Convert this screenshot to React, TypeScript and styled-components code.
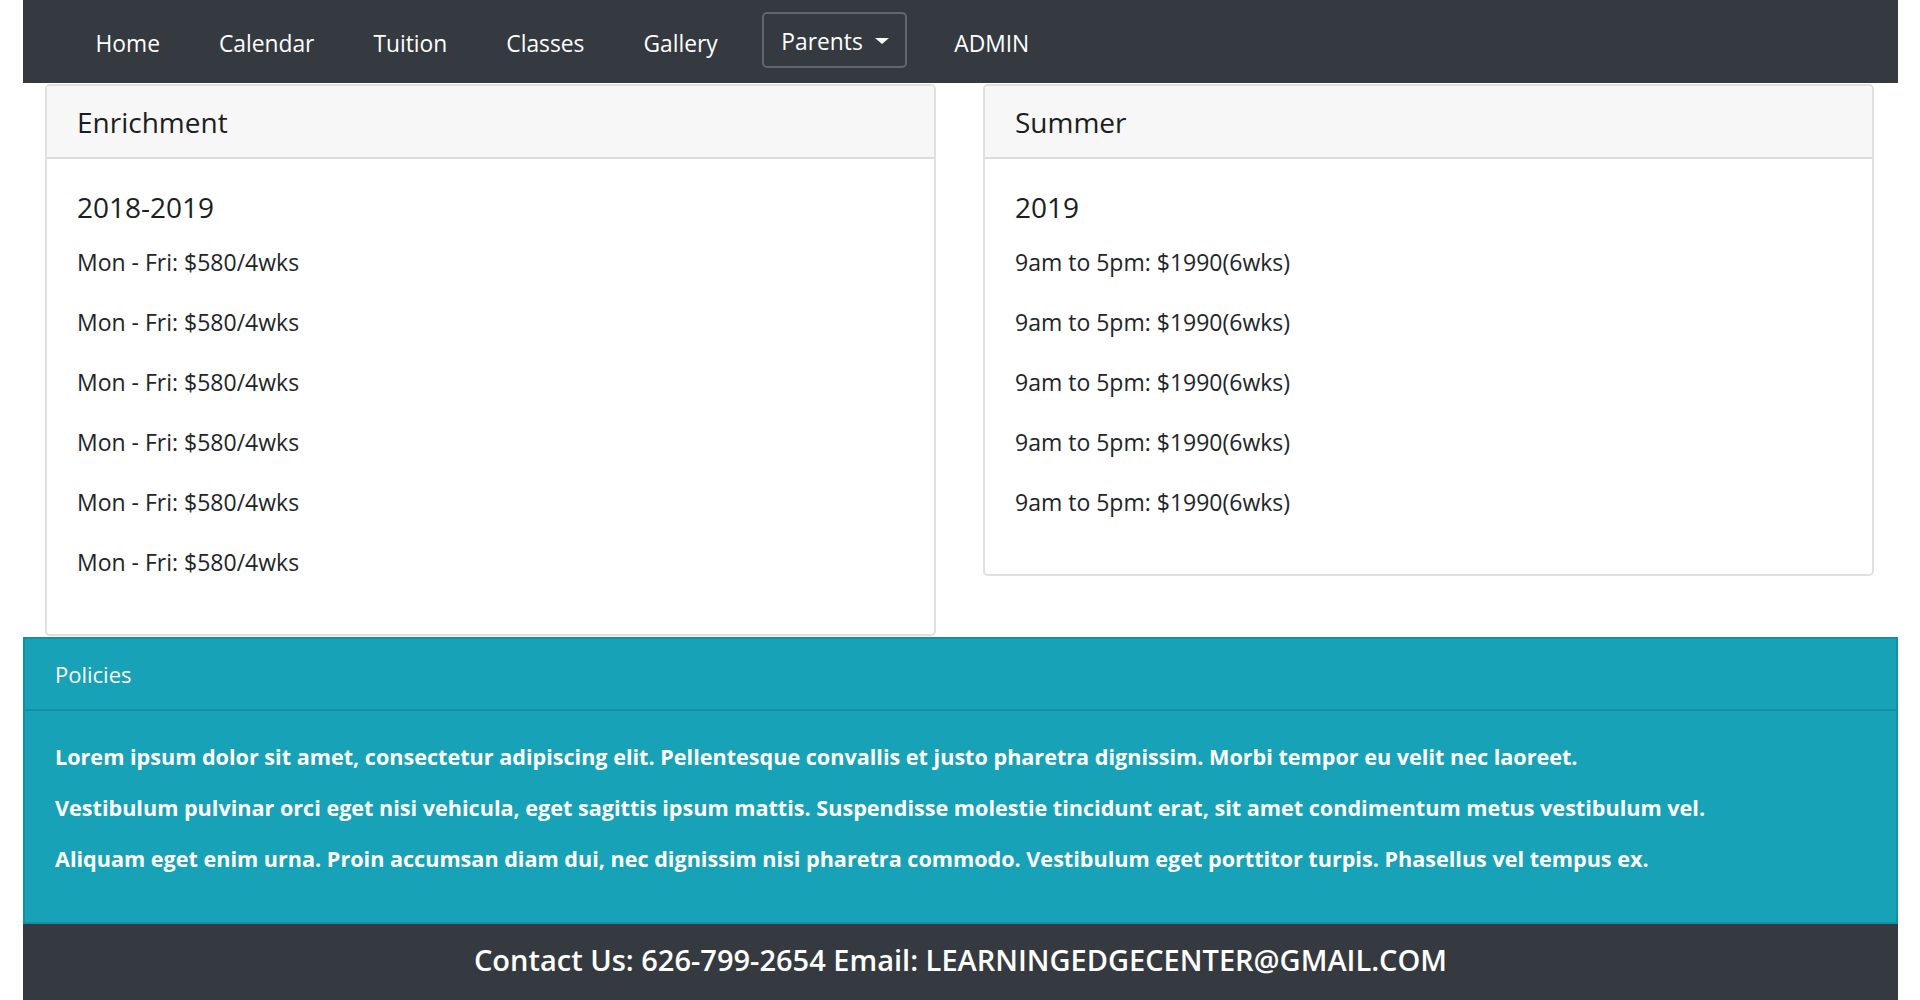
import React from 'react';
import styled, { createGlobalStyle } from 'styled-components';

const GlobalStyle = createGlobalStyle`
  body {
    margin: 0;
    background: #fff;
    font-family: "Open Sans", "Noto Sans", sans-serif;
    color: #212529;
  }
`;

const Page = styled.div`
  padding: 0 22px 0 23px;
`;

const Navbar = styled.nav`
  display: flex;
  align-items: center;
  height: 83px;
  padding-left: 43px;
  background: #343a40;
`;

const NavLink = styled.a`
  padding: 4px 29.5px 0;
  color: #fff;
  font-size: 22.8px;
  line-height: 36px;
  text-decoration: none;
  cursor: pointer;
`;

const DropdownToggle = styled.button`
  display: flex;
  align-items: center;
  gap: 12px;
  height: 56px;
  margin: 0 18px 3px 15px;
  padding: 2px 16px 0 17px;
  background: transparent;
  border: 2px solid #60666d;
  border-radius: 5px;
  color: #fff;
  font-family: inherit;
  font-size: 22.8px;
`;

const Caret = styled.span`
  width: 0;
  height: 0;
  border-top: 6px solid #fff;
  border-left: 7px solid transparent;
  border-right: 7px solid transparent;
`;

const CardRow = styled.div`
  display: grid;
  grid-template-columns: 1fr 1fr;
  gap: 47px;
  align-items: start;
  padding: 1px 24px 1px 22px;
`;

const Card = styled.section`
  border: 2px solid #e0e0e0;
  border-radius: 5px;
  overflow: hidden;
`;

const CardHeader = styled.header`
  display: flex;
  align-items: center;
  height: 71px;
  padding: 0 30px;
  background: #f7f7f7;
  border-bottom: 2px solid #dcdcdc;
  color: #1b1e21;
  font-size: 28px;
  font-weight: 500;
`;

const CardBody = styled.div`
  padding: 30px 30px 30px;
`;

const Season = styled.h4`
  margin: 0 0 19px;
  color: #1b1e21;
  font-size: 28px;
  font-weight: 500;
  line-height: 36px;
`;

const Rate = styled.p`
  margin: 0 0 24px;
  font-size: 23px;
  line-height: 36px;
`;

const Policies = styled.section`
  background: #17a2b8;
  border: 2px solid #1390a3;
  color: #fff;
`;

const PoliciesHeader = styled.header`
  display: flex;
  align-items: center;
  height: 70px;
  padding: 0 30px;
  border-bottom: 2px solid #1390a3;
  font-size: 22px;
`;

const PoliciesBody = styled.div`
  padding: 31px 30px 27px;
`;

const PolicyText = styled.p`
  margin: 0 0 21px;
  font-size: 21.6px;
  font-weight: 700;
  line-height: 30px;
`;

const Footer = styled.footer`
  padding: 18px 0 30px;
  background: #343a40;
  color: #fff;
  text-align: center;
`;

const Contact = styled.h4`
  margin: 0;
  font-size: 29px;
  font-weight: 600;
  line-height: 36px;
`;

const links = ['Home', 'Calendar', 'Tuition', 'Classes', 'Gallery'];

const enrichment = Array(6).fill('Mon - Fri: $580/4wks');
const summer = Array(5).fill('9am to 5pm: $1990(6wks)');

const policies = [
  'Lorem ipsum dolor sit amet, consectetur adipiscing elit. Pellentesque convallis et justo pharetra dignissim. Morbi tempor eu velit nec laoreet.',
  'Vestibulum pulvinar orci eget nisi vehicula, eget sagittis ipsum mattis. Suspendisse molestie tincidunt erat, sit amet condimentum metus vestibulum vel.',
  'Aliquam eget enim urna. Proin accumsan diam dui, nec dignissim nisi pharetra commodo. Vestibulum eget porttitor turpis. Phasellus vel tempus ex.',
];

const TuitionCard: React.FC<{ title: string; season: string; rates: string[] }> = ({ title, season, rates }) => (
  <Card>
    <CardHeader>{title}</CardHeader>
    <CardBody>
      <Season>{season}</Season>
      {rates.map((r, i) => (
        <Rate key={i}>{r}</Rate>
      ))}
    </CardBody>
  </Card>
);

export default function App() {
  return (
    <>
      <GlobalStyle />
      <Page>
        <Navbar>
          {links.map((l) => (
            <NavLink key={l}>{l}</NavLink>
          ))}
          <DropdownToggle>
            Parents
            <Caret />
          </DropdownToggle>
          <NavLink>ADMIN</NavLink>
        </Navbar>
        <CardRow>
          <TuitionCard title="Enrichment" season="2018-2019" rates={enrichment} />
          <TuitionCard title="Summer" season="2019" rates={summer} />
        </CardRow>
        <Policies>
          <PoliciesHeader>Policies</PoliciesHeader>
          <PoliciesBody>
            {policies.map((p, i) => (
              <PolicyText key={i}>{p}</PolicyText>
            ))}
          </PoliciesBody>
        </Policies>
        <Footer>
          <Contact>Contact Us: 626-799-2654 Email: LEARNINGEDGECENTER@GMAIL.COM</Contact>
        </Footer>
      </Page>
    </>
  );
}
